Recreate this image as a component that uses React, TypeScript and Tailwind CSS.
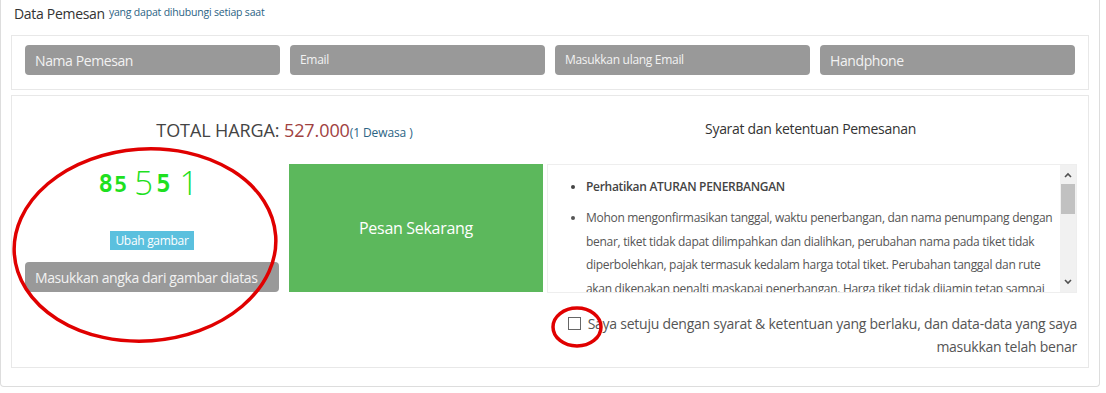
import React from "react";

const font = { fontFamily: '"Open Sans", "Liberation Sans", sans-serif' };
const mono = { fontFamily: '"DejaVu Sans Mono", monospace' };

function Field({ label, small }: { label: string; small?: boolean }) {
  return (
    <div
      className={`flex h-[30px] w-[255px] items-center rounded-[4px] bg-[#999999] pl-[10px] text-[#f2f2f2] ${
        small ? "text-[12px] tracking-[-0.3px]" : "text-[14px] tracking-[-0.4px]"
      }`}
    >
      {label}
    </div>
  );
}

function Scrollbar() {
  return (
    <div className="flex w-[16px] flex-col items-center bg-[#f1f1f1]">
      <svg width="10" height="16" viewBox="0 0 10 16" className="mt-[2px]">
        <path d="M2 10 L5 7 L8 10" stroke="#505050" strokeWidth="1.6" fill="none" />
      </svg>
      <div className="mt-[1px] h-[30px] w-[14px] bg-[#c1c1c1]" />
      <div className="flex-1" />
      <svg width="10" height="16" viewBox="0 0 10 16" className="mb-[2px]">
        <path d="M2 6 L5 9 L8 6" stroke="#505050" strokeWidth="1.6" fill="none" />
      </svg>
    </div>
  );
}

export default function App() {
  return (
    <div className="relative h-[393px] w-[1106px] overflow-hidden bg-white text-[#555]" style={font}>
      <div className="h-[387px] w-[1100px] rounded-b-[4px] border-x border-b border-[#dddddd]">
        <div className="flex h-[35px] items-center pl-[13px] pb-[9px]">
          <span className="text-[14px] tracking-[-0.3px] text-[#333]">Data Pemesan</span>
          <span className="ml-[4px] text-[10.5px] tracking-[-0.2px] text-[#2b6384]">yang dapat dihubungi setiap saat</span>
        </div>

        <div className="mx-[10px] flex h-[55px] items-start gap-[10px] border border-[#e8e8e8] pl-[13px] pr-[11px] pt-[9px]">
          <Field label="Nama Pemesan" />
          <Field label="Email" small />
          <Field label="Masukkan ulang Email" small />
          <Field label="Handphone" />
        </div>

        <div className="mx-[10px] mt-[5px] h-[273px] border border-[#e8e8e8] pl-[13px] pr-[11px]">
          <div className="flex h-[68px] items-center">
            <div className="w-[520px] text-center text-[18px] tracking-[-0.1px] text-[#444]">
              TOTAL HARGA: <span className="text-[#a0413f]">527.000</span>
              <span className="text-[12px] text-[#2b6384]">(1 Dewasa )</span>
            </div>
            <div className="w-[534px] pb-[4px] text-center text-[14px] tracking-[-0.3px] text-[#333]">
              Syarat dan ketentuan Pemesanan
            </div>
          </div>

          <div className="flex">
            <div className="flex w-[254px] flex-col items-center">
              <div className="mt-[4px] flex h-[28px] items-end pr-[7px] text-[#1fe01f]">
                <span className="text-[24px] font-bold leading-none" style={mono}>8</span>
                <span className="ml-[1px] text-[22px] font-bold leading-none" style={mono}>5</span>
                <span className="ml-[7px] text-[33px] font-light leading-[0.82]" style={font}>5</span>
                <span className="ml-[3px] text-[24px] font-bold leading-none" style={mono}>5</span>
                <span className="ml-[9px] text-[33px] font-light leading-[0.82]" style={font}>1</span>
              </div>
              <div className="mt-[35px] flex h-[19px] items-center bg-[#5bc0de] px-[5px] text-[12px] tracking-[-0.3px] text-white">
                Ubah gambar
              </div>
              <div className="mt-[12px] flex h-[30px] w-[254px] items-center rounded-[4px] bg-[#999999] pl-[10px] text-[14px] tracking-[-0.4px] text-[#f2f2f2]">
                Masukkan angka dari gambar diatas
              </div>
            </div>

            <div className="ml-[10px] flex h-[128px] w-[256px] items-center justify-center bg-[#5cb85c] text-[16px] tracking-[-0.3px] text-white">
              Pesan Sekarang
            </div>

            <div className="ml-[4px] flex flex-col">
              <div className="flex h-[129px] w-[530px] border border-[#eeeeee]">
                <div className="flex-1 overflow-hidden pl-[26px] pr-[6px] pt-[10px] text-[12px] leading-[23.4px] tracking-[-0.3px] text-[#555]">
                  <ul className="list-disc pl-[12px]">
                    <li className="font-semibold text-[#444]">Perhatikan ATURAN PENERBANGAN</li>
                    <li className="mt-[8px]">
                      Mohon mengonfirmasikan tanggal, waktu penerbangan, dan nama penumpang dengan benar, tiket tidak
                      dapat dilimpahkan dan dialihkan, perubahan nama pada tiket tidak diperbolehkan, pajak termasuk
                      kedalam harga total tiket. Perubahan tanggal dan rute akan dikenakan penalti maskapai
                      penerbangan. Harga tiket tidak dijamin tetap sampai
                    </li>
                  </ul>
                </div>
                <Scrollbar />
              </div>
              <div className="mt-[19px] flex justify-end">
                <div className="w-[520px] text-right text-[14px] leading-[23px] tracking-[-0.25px] text-[#555]">
                  <span className="mr-[7px] inline-block h-[13px] w-[13px] border border-[#666] bg-white align-[-1px]" />
                  Saya setuju dengan syarat &amp; ketentuan yang berlaku, dan data-data yang saya masukkan telah benar
                </div>
              </div>
            </div>
          </div>
        </div>
      </div>

      <svg className="pointer-events-none absolute left-0 top-0" width="1106" height="393">
        <ellipse cx="145" cy="245" rx="131" ry="96" fill="none" stroke="#e00000" strokeWidth="3.5" transform="rotate(-4 145 245)" />
        <ellipse cx="577" cy="327" rx="24" ry="19" fill="none" stroke="#e00000" strokeWidth="3.5" />
      </svg>
    </div>
  );
}
